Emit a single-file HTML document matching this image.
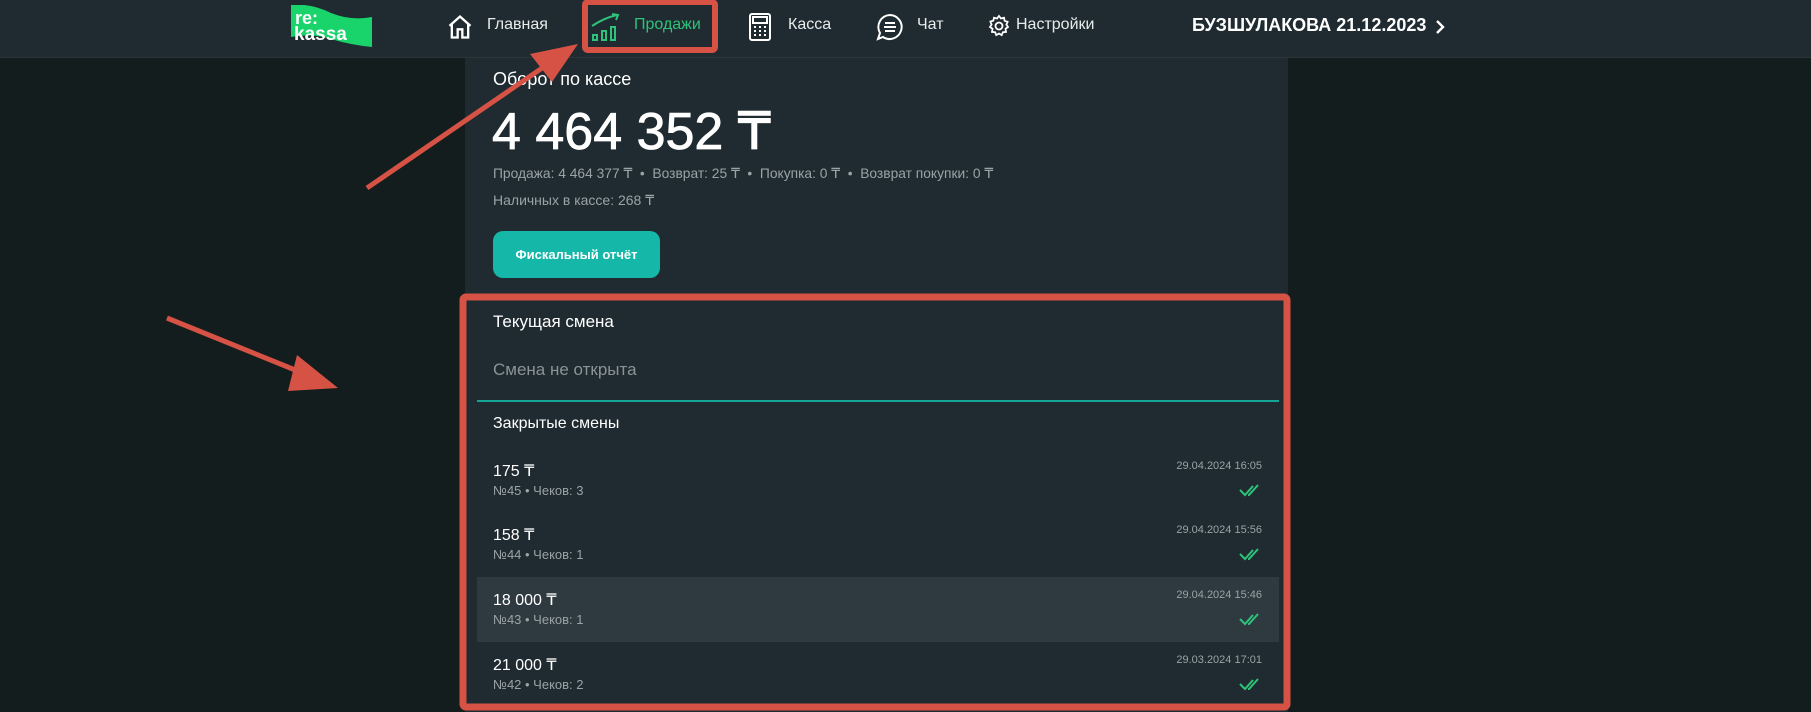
<!DOCTYPE html>
<html><head><meta charset="utf-8"><style>
*{margin:0;padding:0;box-sizing:border-box}
body{width:1811px;height:712px;background:#131d1e;font-family:"Liberation Sans",sans-serif;position:relative;overflow:hidden;color:#fff}
.nav{position:absolute;left:0;top:0;width:1811px;height:58px;background:#1f2b30;border-bottom:1px solid #2a363a}
.a{position:absolute;white-space:nowrap}
.ni{font-size:16px;color:#e8ecec;top:16px}
.panel{position:absolute;left:465px;top:58px;width:823px;height:654px;background:#1f2b30}
.g{color:#9aa3a7}
</style></head><body>
<div class="nav">
 <svg class="a" style="left:291px;top:5px" width="81" height="42" viewBox="0 0 81 42"><path d="M0 0 Q20 -2 40 8 Q60 16 81 12 L81 42 Q60 40 40 34 Q20 28 0 32Z" fill="#19d36b"/><text x="4" y="19" font-family="Liberation Sans" font-weight="bold" font-size="18" fill="#fff">re:</text><text x="3" y="35" font-family="Liberation Sans" font-weight="bold" font-size="19" fill="#fff">kassa</text></svg>
 <svg class="a" style="left:446px;top:13px" width="28" height="28" viewBox="0 0 24 24" fill="none" stroke="#fff" stroke-width="2"><path d="M3 11 L12 3 L21 11 M5 9 V21 H10 V14 H14 V21 H19 V9"/></svg>
 <div class="a ni" style="left:487px">Главная</div>
 <svg class="a" style="left:590px;top:12px" width="32" height="30" viewBox="0 0 32 30" fill="none" stroke="#2fc27a" stroke-width="2"><path d="M2 14 Q14 6 27 3 M22 2 L28 3 L26 8"/><rect x="3" y="23" width="4" height="5"/><rect x="12" y="19" width="4" height="9"/><rect x="21" y="15" width="4" height="13"/></svg>
 <div class="a ni" style="left:634px;color:#2fc27a">Продажи</div>
 <svg class="a" style="left:748px;top:13px" width="24" height="28" viewBox="0 0 24 28" fill="none" stroke="#fff" stroke-width="2"><rect x="2" y="1" width="20" height="26" rx="2"/><rect x="5" y="4" width="14" height="6"/><path d="M6 14h2M11 14h2M16 14h2M6 18h2M11 18h2M16 18h2M6 22h2M11 22h2M16 22h2"/></svg>
 <div class="a ni" style="left:788px">Касса</div>
 <svg class="a" style="left:875px;top:12px" width="30" height="30" viewBox="0 0 30 30" fill="none" stroke="#fff" stroke-width="2"><path d="M15 3 A12 12 0 1 1 8 25 L3 27 L5 21 A12 12 0 0 1 15 3Z M10 11h10M9 15h12M10 19h10"/></svg>
 <div class="a ni" style="left:917px">Чат</div>
 <svg class="a" style="left:987px;top:14px" width="24" height="24" viewBox="0 0 24 24" fill="none" stroke="#fff" stroke-width="1.8"><circle cx="12" cy="12" r="3.5"/><path d="M12 2l2 2.5 3-.8.6 3.1 3 1-1.2 2.9L21 13l-2.5 1.8.5 3.1-3.1.3-1.2 2.9L12 19.5 9.3 21.1 8.1 18.2 5 17.9l.5-3.1L3 13l1.6-2.5L3.4 7.6l3-1L7 3.7l3 .8z"/></svg>
 <div class="a ni" style="left:1016px">Настройки</div>
 <div class="a" style="left:1192px;top:15px;font-size:18px;font-weight:bold">БУЗШУЛАКОВА 21.12.2023</div>
 <svg class="a" style="left:1434px;top:19px" width="12" height="16" viewBox="0 0 12 16" fill="none" stroke="#fff" stroke-width="2.4"><path d="M3 2l6 6-6 6"/></svg>
</div>
<div class="panel"></div>
<div class="a" style="left:493px;top:69px;font-size:18px">Оборот по кассе</div>
<div class="a" style="left:492px;top:102px;font-size:52px;letter-spacing:0px;-webkit-text-stroke:0.8px #fff">4 464 352 ₸</div>
<div class="a g" style="left:493px;top:166px;font-size:13.8px">Продажа: 4 464 377 ₸ &nbsp;•&nbsp; Возврат: 25 ₸ &nbsp;•&nbsp; Покупка: 0 ₸ &nbsp;•&nbsp; Возврат покупки: 0 ₸</div>
<div class="a g" style="left:493px;top:192px;font-size:14px">Наличных в кассе: 268 ₸</div>
<div class="a" style="left:493px;top:231px;width:167px;height:47px;border-radius:10px;background:#15b8a8;font-size:13px;font-weight:bold;text-align:center;line-height:47px">Фискальный отчёт</div>
<div class="a" style="left:493px;top:312px;font-size:17px">Текущая смена</div>
<div class="a" style="left:493px;top:360px;font-size:17px;color:#8a9398">Смена не открыта</div>
<div class="a" style="left:477px;top:400px;width:802px;height:2px;background:#16a595"></div>
<div class="a" style="left:493px;top:415px;font-size:16px">Закрытые смены</div>
<div class="a" style="left:477px;top:577px;width:802px;height:65px;background:#2e3a40"></div>

<div class="a" style="left:493px;top:461px;font-size:16px">175 ₸</div>
<div class="a g" style="left:493px;top:483px;font-size:13px">№45 • Чеков: 3</div>
<div class="a g" style="right:549px;top:460px;font-size:11px">29.04.2024 16:05</div>
<div class="a" style="left:493px;top:525px;font-size:16px">158 ₸</div>
<div class="a g" style="left:493px;top:547px;font-size:13px">№44 • Чеков: 1</div>
<div class="a g" style="right:549px;top:524px;font-size:11px">29.04.2024 15:56</div>
<div class="a" style="left:493px;top:590px;font-size:16px">18 000 ₸</div>
<div class="a g" style="left:493px;top:612px;font-size:13px">№43 • Чеков: 1</div>
<div class="a g" style="right:549px;top:589px;font-size:11px">29.04.2024 15:46</div>
<div class="a" style="left:493px;top:655px;font-size:16px">21 000 ₸</div>
<div class="a g" style="left:493px;top:677px;font-size:13px">№42 • Чеков: 2</div>
<div class="a g" style="right:549px;top:654px;font-size:11px">29.03.2024 17:01</div>

<svg class="a" style="left:0;top:0" width="1811" height="712">
<defs><g id="ck"><path d="M0 6l5 5 8-9M8 11l1 0 9-10" fill="none" stroke="#2fc27a" stroke-width="2"/></g></defs>
<use href="#ck" x="1240" y="484"/><use href="#ck" x="1240" y="548"/><use href="#ck" x="1240" y="613"/><use href="#ck" x="1240" y="678"/>
<rect x="585" y="2" width="130" height="48" fill="none" stroke="#d55245" stroke-width="6" rx="3"/>
<rect x="463" y="297" width="824" height="410" fill="none" stroke="#d55245" stroke-width="7" rx="3"/>
<line x1="367" y1="188" x2="548" y2="64" stroke="#d55245" stroke-width="5"/>
<polygon points="578,44 530,54 552,82" fill="#d55245"/>
<line x1="167" y1="318" x2="305" y2="374" stroke="#d55245" stroke-width="5"/>
<polygon points="338,388 297,355 288,391" fill="#d55245"/>
</svg>
</body></html>
